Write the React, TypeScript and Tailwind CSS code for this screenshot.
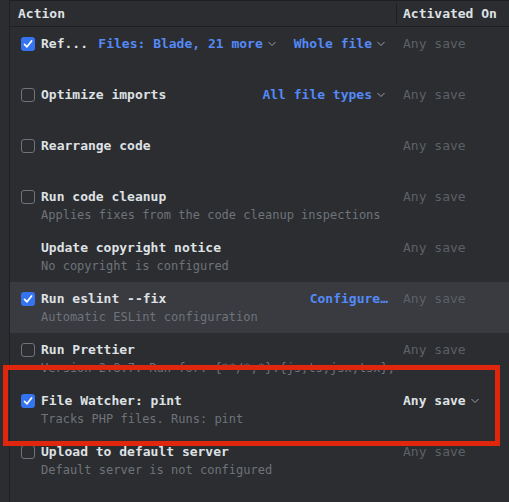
import { ReactNode } from 'react';

interface Row {
  title: string;
  desc?: string;
  checked?: boolean;
  noBox?: boolean;
  extra?: ReactNode;
  active?: boolean;
  highlight?: boolean;
  marked?: boolean;
}

const Chevron = ({ className = '' }: { className?: string }) => (
  <svg width="12" height="8" viewBox="0 0 12 8" className={className} aria-hidden="true">
    <path d="M1.5 2 L5 5.5 L8.5 2" fill="none" stroke="currentColor" strokeWidth="1" />
  </svg>
);

const Checkbox = ({ checked }: { checked?: boolean }) =>
  checked ? (
    <span className="flex h-[14px] w-[14px] shrink-0 items-center justify-center rounded-[3px] bg-[#3574f0]">
      <svg width="14" height="14" viewBox="0 0 14 14" aria-hidden="true">
        <path d="M3.5 7.3 L6 9.8 L10.6 4" fill="none" stroke="#fff" strokeWidth="1.7" strokeLinecap="round" strokeLinejoin="round" />
      </svg>
    </span>
  ) : (
    <span className="h-[14px] w-[14px] shrink-0 rounded-[3px] border border-[#6f737a]" />
  );

const Link = ({ label, chevron = true }: { label: string; chevron?: boolean }) => (
  <span className="flex items-center text-[#548af7] font-bold">
    {label}
    {chevron && <Chevron className="ml-[4px] text-[#9a9ea6]" />}
  </span>
);

const rows: Row[] = [
  {
    title: 'Ref...',
    checked: true,
    extra: (
      <div className="ml-[9px] flex flex-1 items-center justify-end gap-[15px] pr-[9px]">
        <Link label="Files: Blade, 21 more" />
        <Link label="Whole file" />
      </div>
    ),
  },
  {
    title: 'Optimize imports',
    extra: (
      <div className="flex flex-1 items-center justify-end pr-[9px]">
        <Link label="All file types" />
      </div>
    ),
  },
  { title: 'Rearrange code' },
  { title: 'Run code cleanup', desc: 'Applies fixes from the code cleanup inspections' },
  { title: 'Update copyright notice', desc: 'No copyright is configured', noBox: true },
  {
    title: 'Run eslint --fix',
    desc: 'Automatic ESLint configuration',
    checked: true,
    highlight: true,
    extra: (
      <div className="flex flex-1 items-center justify-end pr-[9px]">
        <Link label="Configure…" chevron={false} />
      </div>
    ),
  },
  { title: 'Run Prettier', desc: 'Version 2.8.7. Run for: {**/*,*}.{js,ts,jsx,tsx},' },
  { title: 'File Watcher: pint', desc: 'Tracks PHP files. Runs: pint', checked: true, active: true, marked: true },
  { title: 'Upload to default server', desc: 'Default server is not configured' },
];

export default function App() {
  return (
    <div
      className="h-[502px] w-[509px] overflow-hidden bg-[#2b2d30] text-[13px] text-[#dfe1e5]"
      style={{ fontFamily: '"DejaVu Sans Mono", "Liberation Mono", monospace' }}
    >
      <div className="ml-[9px] h-full border-l border-t border-[#1e1f22]">
        <div className="flex h-[26px] items-center border-b border-[#1e1f22] font-bold">
          <div className="w-[386px] pl-[8px]">Action</div>
          <div className="h-[21px] w-px bg-[#1e1f22]" />
          <div className="pl-[6px]">Activated On</div>
        </div>

        {rows.map((r) => (
          <div
            key={r.title}
            className={`relative flex h-[51px] pt-[8px] ${r.highlight ? 'bg-[#393b40]' : ''}`}
          >
            <div className="w-[387px] shrink-0 overflow-hidden pl-[11px]">
              <div className="flex h-[17px] items-center">
                {r.noBox ? <span className="w-[14px] shrink-0" /> : <Checkbox checked={r.checked} />}
                <span className="ml-[6px] whitespace-nowrap font-bold">{r.title}</span>
                {r.extra}
              </div>
              {r.desc && (
                <div className="mt-[2px] whitespace-nowrap pl-[20px] text-[12px] leading-[17px] text-[#6f737a]">
                  {r.desc}
                </div>
              )}
            </div>
            <div className="flex h-[17px] items-center pl-[6px]">
              {r.active ? (
                <span className="flex items-center font-bold text-[#dfe1e5]">
                  Any save
                  <Chevron className="ml-[4px] text-[#9a9ea6]" />
                </span>
              ) : (
                <span className="text-[#5d6066]">Any save</span>
              )}
            </div>
            {r.marked && (
              <div className="pointer-events-none absolute -top-[19px] -bottom-[11px] -left-[7px] right-[9px] z-10 border-[5px] border-[#e1260e]" />
            )}
          </div>
        ))}
      </div>
    </div>
  );
}
